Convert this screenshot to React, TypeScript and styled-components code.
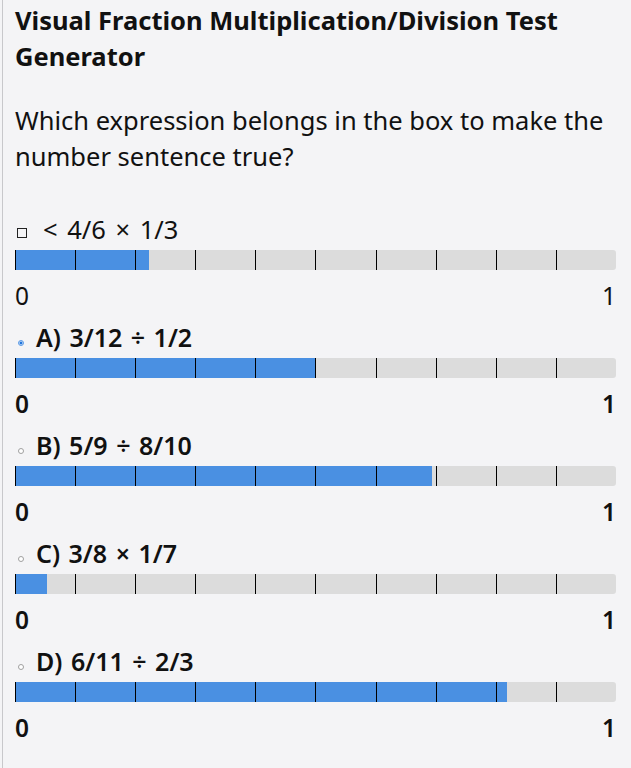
import React from "react";
import styled, { createGlobalStyle } from "styled-components";

const Global = createGlobalStyle`
  html, body { margin: 0; padding: 0; background: #f4f4f6; }
  body { font-family: "Noto Sans", "Open Sans", sans-serif; color: #111; }
`;

const Page = styled.div`
  margin-left: 2px;
  border-left: 1px solid #c8c8cb;
  padding: 2px 15px 40px 12px;
  min-height: 768px;
  box-sizing: border-box;
`;

const Title = styled.h1`
  margin: 0;
  font-size: 25.5px;
  line-height: 36px;
  font-weight: 700;
`;

const Prompt = styled.p`
  margin: 28px 0 0;
  font-size: 25.5px;
  line-height: 36px;
  font-weight: 400;
`;

const Block = styled.div<{ $first?: boolean }>`
  margin-top: ${(p) => (p.$first ? "40px" : "0")};
  margin-bottom: 11px;
  display: flex;
  flex-direction: column;
`;

const Label = styled.div<{ $bold?: boolean }>`
  display: flex;
  align-items: flex-end;
  font-size: ${(p) => (p.$bold ? "25px" : "25.5px")};
  line-height: 30px;
  word-spacing: ${(p) => (p.$bold ? "2px" : "3px")};
  font-weight: ${(p) => (p.$bold ? 600 : 400)};
`;

const Box = styled.span`
  flex: none;
  width: 10px;
  height: 10px;
  border: 1px solid #222;
  box-sizing: border-box;
  margin: 0 16px 6px 2px;
`;

const Radio = styled.span<{ $checked?: boolean }>`
  flex: none;
  width: 6px;
  height: 6px;
  border-radius: 50%;
  box-sizing: border-box;
  margin: 0 12px 6px 3px;
  border: 1px solid ${(p) => (p.$checked ? "#5b9be6" : "#a0a0a0")};
  background: ${(p) => (p.$checked ? "radial-gradient(circle, #1f74dc 40%, #c4dbf6 60%)" : "#fff")};
`;

const Bar = styled.div`
  position: relative;
  height: 20px;
  margin-top: 6px;
  background: #dcdcdc;
  border-radius: 0 3px 3px 0;
  overflow: hidden;
`;

const Fill = styled.div`
  position: absolute;
  left: 0;
  top: 0;
  bottom: 0;
  background: #4a90e2;
`;

const Ticks = styled.div`
  position: absolute;
  inset: 0;
  display: grid;
  grid-template-columns: repeat(10, 1fr);
`;

const Seg = styled.div`
  border-left: 1px solid #000;
`;

const Scale = styled.div<{ $bold?: boolean }>`
  display: flex;
  justify-content: space-between;
  font-size: 24.5px;
  line-height: 30px;
  margin-top: 11px;
  font-weight: ${(p) => (p.$bold ? 600 : 400)};
`;

function FractionBar({ value }: { value: number }) {
  return (
    <Bar>
      <Fill style={{ width: `${value * 100}%` }} />
      <Ticks>
        {Array.from({ length: 10 }).map((_, i) => (
          <Seg key={i} />
        ))}
      </Ticks>
    </Bar>
  );
}

const options = [
  { label: "A) 3/12 ÷ 1/2", value: (3 / 12) / (1 / 2), checked: true },
  { label: "B) 5/9 ÷ 8/10", value: (5 / 9) / (8 / 10), checked: false },
  { label: "C) 3/8 × 1/7", value: (3 / 8) * (1 / 7), checked: false },
  { label: "D) 6/11 ÷ 2/3", value: (6 / 11) / (2 / 3), checked: false },
];

export default function App() {
  return (
    <>
      <Global />
      <Page>
        <Title>Visual Fraction Multiplication/Division Test Generator</Title>
        <Prompt>Which expression belongs in the box to make the number sentence true?</Prompt>
        <Block $first>
          <Label>
            <Box />
            &lt; 4/6 × 1/3
          </Label>
          <FractionBar value={(4 / 6) * (1 / 3)} />
          <Scale>
            <span>0</span>
            <span>1</span>
          </Scale>
        </Block>
        {options.map((o) => (
          <Block key={o.label}>
            <Label $bold>
              <Radio $checked={o.checked} />
              {o.label}
            </Label>
            <FractionBar value={o.value} />
            <Scale $bold>
              <span>0</span>
              <span>1</span>
            </Scale>
          </Block>
        ))}
      </Page>
    </>
  );
}
